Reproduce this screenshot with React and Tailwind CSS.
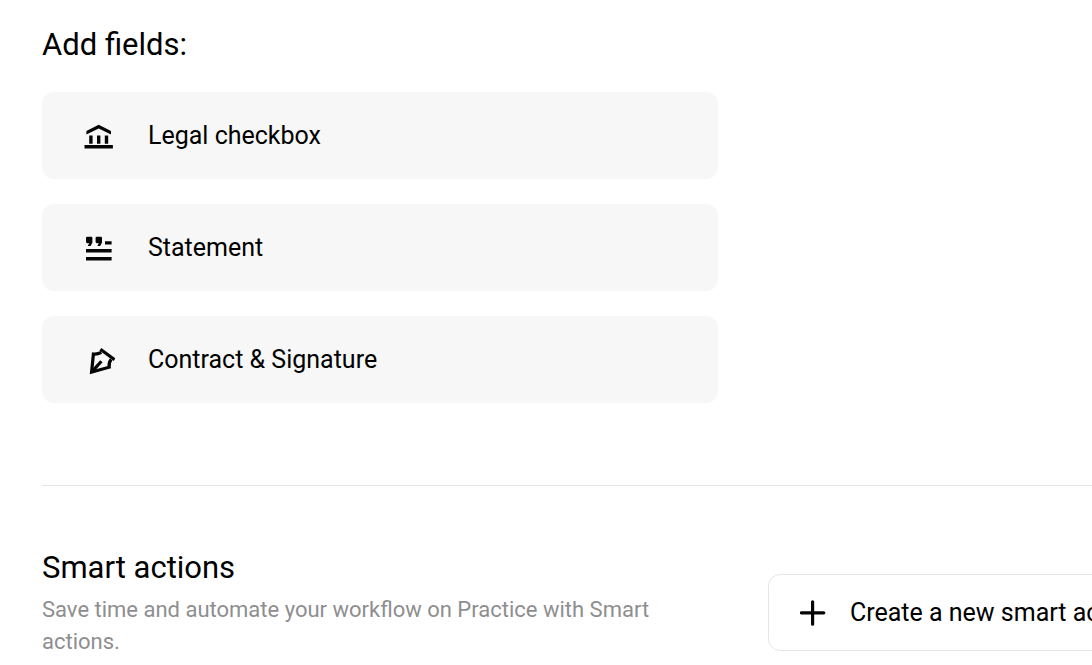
function BankIcon() {
  return (
    <svg className="shrink-0" width="32" height="31" viewBox="0 0 32 31" fill="none" aria-hidden="true">
      <path d="M15.7 4.8 28 11V14.6L15.7 8.4 3.4 14.6V11Z" fill="#050505" />
      <path d="M6.2 15.4h3.4v8.4h-3.4zM14 15.4h3.4v8.4h-3.4zM21.8 15.4h3.4v8.4h-3.4zM1.5 25h28.4v3.4H1.5z" fill="#050505" />
    </svg>
  );
}

function StatementIcon() {
  return (
    <svg className="shrink-0" width="32" height="31" viewBox="0 0 32 31" fill="#050505" aria-hidden="true">
      <path d="M3 6Q3 4.8 4.2 4.8H8.2Q9.4 4.8 9.4 6V10.4L7.6 14H4.8L6.2 11.2H4.4Q3 11.2 3 9.8Z" />
      <path d="M12.6 6Q12.6 4.8 13.8 4.8H17.8Q19 4.8 19 6V10.4L17.2 14H14.4L15.8 11.2H14Q12.6 11.2 12.6 9.8Z" />
      <path d="M22 9.2h6.6v3.2H22zM3 17h25.6v3.4H3zM3 25h25.6v3.4H3z" />
    </svg>
  );
}

function PenIcon() {
  return (
    <svg className="shrink-0" width="32" height="31" viewBox="0 0 32 31" fill="none" stroke="#050505" strokeWidth="3.2" aria-hidden="true">
      <path d="M18.4 8.4Q14.6 10.4 10.4 10L8.6 28 26.2 23.2Q25.4 18.6 28.2 15.4" />
      <path d="M17.4 5.2 31.6 15.6" />
      <path d="M9.2 27.4 18.4 17.2" />
    </svg>
  );
}

const fields = [
  { label: "Legal checkbox", Icon: BankIcon },
  { label: "Statement", Icon: StatementIcon },
  { label: "Contract & Signature", Icon: PenIcon },
];

export default function App() {
  return (
    <main className="min-h-screen overflow-x-hidden bg-white pl-[42px] pt-[25px] font-[Roboto,sans-serif] text-black">
      <section>
        <h2 className="text-[31px] leading-10">Add fields:</h2>
        <div className="mt-[27px] flex w-full max-w-[676px] flex-col gap-[25px]">
          {fields.map(({ label, Icon }) => (
            <button
              key={label}
              type="button"
              className="flex items-center gap-[33px] rounded-xl bg-[#f7f7f7] px-[41px] py-7 text-left text-[25px] leading-[31px]"
            >
              <Icon />
              {label}
            </button>
          ))}
        </div>
      </section>
      <section className="mt-[82px] flex items-start gap-[50px] border-t border-[#e5e5e5] pt-[62px]">
        <div className="w-[676px] shrink-0">
          <h2 className="text-[31px] leading-10">Smart actions</h2>
          <p className="mt-1.5 max-w-[640px] text-[22px] leading-8 text-[#8e8e90]">
            Save time and automate your workflow on Practice with Smart actions.
          </p>
        </div>
        <button
          type="button"
          className="mt-[26px] flex shrink-0 items-center gap-6 whitespace-nowrap rounded-xl border border-[#e5e5e5] bg-white py-[22px] pl-[31px] pr-8 text-[25px] leading-[31px]"
        >
          <svg className="shrink-0" width="26" height="26" viewBox="0 0 26 26" stroke="#050505" strokeWidth="3.2" strokeLinecap="round" aria-hidden="true">
            <path d="M12.6 1.8v22.4M1.4 12.8h22.4" />
          </svg>
          Create a new smart action
        </button>
      </section>
    </main>
  );
}
